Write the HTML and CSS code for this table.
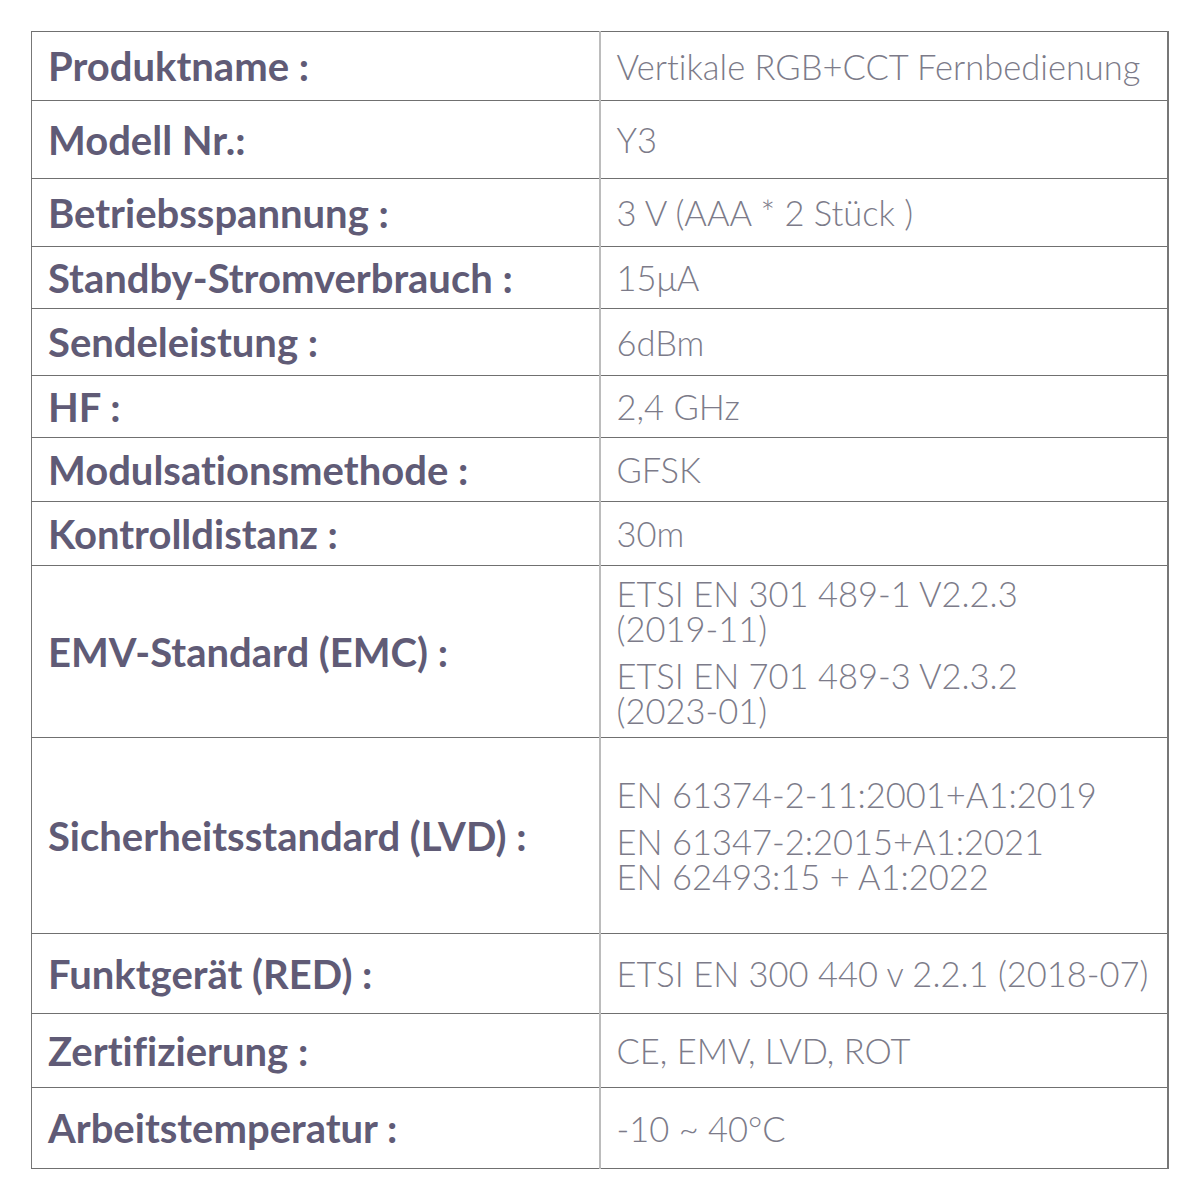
FILE: index.html
```html
<!DOCTYPE html>
<html lang="de">
<head>
<meta charset="utf-8">
<link rel="stylesheet" href="styles.css">
</head>
<body>
<div class="sheet">
<table class="spec">
<colgroup><col class="c1"><col class="c2"></colgroup>
<tr class="r1"><th>Produktname :</th><td>Vertikale RGB+CCT Fernbedienung</td></tr>
<tr class="r2"><th>Modell Nr.:</th><td>Y3</td></tr>
<tr class="r3"><th>Betriebsspannung :</th><td>3 V (AAA * 2 Stück )</td></tr>
<tr class="r4"><th>Standby-Stromverbrauch :</th><td>15μA</td></tr>
<tr class="r5"><th>Sendeleistung :</th><td>6dBm</td></tr>
<tr class="r6"><th>HF :</th><td>2,4 GHz</td></tr>
<tr class="r7"><th>Modulsationsmethode :</th><td>GFSK</td></tr>
<tr class="r8"><th>Kontrolldistanz :</th><td>30m</td></tr>
<tr class="r9"><th>EMV-Standard (EMC) :</th><td><p>ETSI EN 301 489-1 V2.2.3<br>(2019-11)</p><p>ETSI EN 701 489-3 V2.3.2<br>(2023-01)</p></td></tr>
<tr class="r10"><th>Sicherheitsstandard (LVD) :</th><td><p>EN 61374-2-11:2001+A1:2019</p><p>EN 61347-2:2015+A1:2021<br>EN 62493:15 + A1:2022</p></td></tr>
<tr class="r11"><th>Funktgerät (RED) :</th><td>ETSI EN 300 440 v 2.2.1 (2018-07)</td></tr>
<tr class="r12"><th>Zertifizierung :</th><td>CE, EMV, LVD, ROT</td></tr>
<tr class="r13"><th>Arbeitstemperatur :</th><td>-10 ~ 40°C</td></tr>
</table>
</div>
</body>
</html>
```

FILE: styles.css
```css
html, body {
  margin: 0;
  padding: 0;
  background: #ffffff;
}
.sheet {
  padding: 31px 0 0 31px;
}
.spec {
  border-collapse: collapse;
  width: 1136px;
  table-layout: fixed;
  font-family: Lato, "Open Sans", sans-serif;
  font-variant-ligatures: none;
  border-left: 1px solid #777777;
  border-right: 2px solid #777777;
}
.c1 { width: 568px; }
.c2 { width: 568px; }
.spec tr {
  border-top: 1px solid #707070;
  border-bottom: 1px solid #707070;
}
.spec th {
  text-align: left;
  font-weight: 700;
  font-size: 40px;
  color: #605b76;
  padding: 0 0 0 16px;
  border-right: 2px solid #bcbcbc;
  vertical-align: middle;
  white-space: nowrap;
}
.spec td {
  font-weight: 300;
  font-size: 34.5px;
  color: #7c7b89;
  padding: 0 0 0 16px;
  vertical-align: middle;
  line-height: 35px;
  white-space: nowrap;
}
.spec td p {
  margin: 0;
}
.spec td p + p {
  margin-top: 12px;
}
.r1 { height: 69px; }
.r2 { height: 78px; }
.r3 { height: 68px; }
.r4 { height: 62px; }
.r5 { height: 67px; }
.r6 { height: 62px; }
.r7 { height: 64px; }
.r8 { height: 64px; }
.r9 { height: 172px; }
.r10 { height: 196px; }
.r11 { height: 80px; }
.r12 { height: 74px; }
.r13 { height: 81px; }
```
